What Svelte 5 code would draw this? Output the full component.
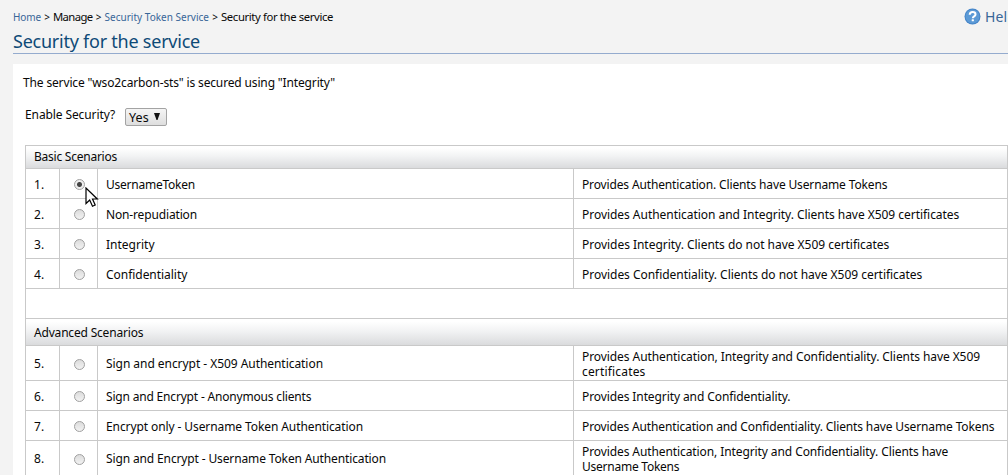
<script>
  const basic = [
    { n: '1.', name: 'UsernameToken', w: 89, lines: [['Provides Authentication. Clients have Username Tokens', 305.3]], checked: true },
    { n: '2.', name: 'Non-repudiation', w: 91, lines: [['Provides Authentication and Integrity. Clients have X509 certificates', 377.3]] },
    { n: '3.', name: 'Integrity', w: 48.5, lines: [['Provides Integrity. Clients do not have X509 certificates', 307.3]] },
    { n: '4.', name: 'Confidentiality', w: 81.3, lines: [['Provides Confidentiality. Clients do not have X509 certificates', 340.3]] }
  ];
  const advanced = [
    { n: '5.', name: 'Sign and encrypt - X509 Authentication', w: 217, h: 35, lines: [['Provides Authentication, Integrity and Confidentiality. Clients have X509', 398], ['certificates', 63.5]] },
    { n: '6.', name: 'Sign and Encrypt - Anonymous clients', w: 205.3, lines: [['Provides Integrity and Confidentiality.', 208.3]] },
    { n: '7.', name: 'Encrypt only - Username Token Authentication', w: 257, lines: [['Provides Authentication and Confidentiality. Clients have Username Tokens', 412.3]] },
    { n: '8.', name: 'Sign and Encrypt - Username Token Authentication', w: 280, h: 35, lines: [['Provides Authentication, Integrity and Confidentiality. Clients have', 366.3], ['Username Tokens', 97.3]] }
  ];

  // Tracks a single line of text so that it spans the given width.
  function track(node, width) {
    const natural = node.getBoundingClientRect().width;
    node.style.letterSpacing = (width - natural) / node.textContent.length + 'px';
  }
</script>

{#snippet row(r)}
  <div class="row" style:height="{r.h ?? 30}px">
    <div class="cell"><span use:track={10.5}>{r.n}</span></div>
    <div class="cell pick"><i class="radio" class:on={r.checked}></i></div>
    <div class="cell"><span use:track={r.w}>{r.name}</span></div>
    <div class="cell desc">
      {#each r.lines as [text, w]}<div><span use:track={w}>{text}</span></div>{/each}
    </div>
  </div>
{/snippet}

<div class="page">
  <header>
    <nav>
      <a href="#home"><span use:track={28}>Home</span></a><b>&gt;</b><em><span use:track={39.5}>Manage</span></em><b>&gt;</b><a href="#sts"><span use:track={104.5}>Security Token Service</span></a><b>&gt;</b><em><span use:track={112}>Security for the service</span></em>
    </nav>
    <a class="help" href="#help">
      <svg width="17" height="17" viewBox="0 0 17 17">
        <circle cx="8.5" cy="8.5" r="8" fill="#4484c8" />
        <circle cx="8.5" cy="8.5" r="7" fill="#5c9ad6" />
        <path d="M5.7 6.7C5.8 4.9 7 4.1 8.6 4.1c1.8 0 2.9 1 2.9 2.3 0 2-2.7 2-2.7 3.8" fill="none" stroke="#fff" stroke-width="2" />
        <rect x="7.7" y="11.2" width="2.2" height="2.1" rx=".5" fill="#fff" />
      </svg>
      <span use:track={31}>Help</span>
    </a>
  </header>
  <h1><span use:track={187}>Security for the service</span></h1>
  <main>
    <p><span use:track={312}>The service "wso2carbon-sts" is secured using "Integrity"</span></p>
    <div class="enable">
      <label for="enable"><span use:track={90}>Enable Security?</span></label>
      <button id="enable"><span use:track={20}>Yes</span><svg width="6" height="8" viewBox="0 0 6 8"><path d="M0 0H6L3.5 7H2.5Z" fill="#111" /></svg></button>
    </div>
    <section>
      <div class="head"><span use:track={83}>Basic Scenarios</span></div>
      {#each basic as r}{@render row(r)}{/each}
      <div class="gap"></div>
      <div class="head tall"><span use:track={109.3}>Advanced Scenarios</span></div>
      {#each advanced as r}{@render row(r)}{/each}
    </section>
  </main>
  <svg class="cursor" width="14" height="21" viewBox="0 0 14 21">
    <path d="M1 1V16.5L4.7 13 7.5 19.2 10.2 18 7.5 12H12.3Z" fill="#fff" stroke="#000" stroke-width="1.2" />
  </svg>
</div>

<style>
  :global(body) { margin: 0; }
  .page {
    position: relative; width: 1008px; height: 475px; overflow: hidden;
    box-sizing: border-box; padding-left: 13px; background: #f3f3f3; color: #080808;
    font: 12px/15px "Noto Sans", "Open Sans", sans-serif; white-space: nowrap;
  }
  span { display: inline-block; }
  a { text-decoration: none; color: #386698; }
  header { display: flex; justify-content: space-between; height: 31px; }
  nav { display: flex; padding-top: 9px; }
  nav a { font-size: 10px; line-height: 16px; }
  nav b { width: 12px; text-align: center; font-weight: 400; font-size: 10px; line-height: 16px; }
  nav em { font-style: normal; font-size: 11.3px; }
  .help { display: flex; gap: 4px; width: 44px; padding-top: 8px; font-size: 14px; line-height: 18px; flex: none; }
  .help svg { flex: none; }
  h1 {
    height: 22px; margin: 0; border-bottom: 1px solid #94abce;
    font-size: 18px; line-height: 21px; font-weight: 400; color: #0e4a77;
  }
  main { height: 411px; margin-top: 10px; background: #fff; }
  p { margin: 0; padding: 11px 0 0 10px; }
  .enable { display: flex; height: 55px; padding: 17px 0 0 12px; box-sizing: border-box; }
  label { width: 100px; }
  button {
    display: flex; align-items: center; gap: 5px; width: 42px; height: 18px; margin-top: 1px;
    padding: 0 0 0 3px; border: 1px solid #a3a3a3; border-radius: 2px;
    background: linear-gradient(#f5f5f5, #dedede); color: #080808;
    font: 12.5px/16px "Noto Sans", sans-serif;
  }
  button span { padding-top: 1px; }
  section {
    width: 983px; margin-left: 12px; box-sizing: border-box;
    border: 1px solid #c9c9c9; border-bottom: 0;
  }
  .head, .row, .gap { box-sizing: border-box; border-bottom: 1px solid #c9c9c9; }
  .head {
    height: 23px; padding-left: 8px; line-height: 22px;
    background: linear-gradient(#fff 10%, #f1f2f3 48%, #dadbdd);
  }
  .tall { height: 27px; line-height: 27px; }
  .gap { height: 30px; }
  .row { display: grid; grid-template-columns: 34px 38px 476px 1fr; }
  .cell {
    display: flex; align-items: center; box-sizing: border-box;
    padding: 1px 0 0 8px; border-right: 1px solid #c9c9c9;
  }
  .desc { flex-direction: column; align-items: flex-start; justify-content: center; border: 0; }
  .desc div { height: 15px; }
  .pick { padding: 2px 0 0 14px; }
  .radio {
    width: 11px; height: 11px; box-sizing: border-box; border: 1px solid #a0a0a0;
    border-radius: 50%; background: linear-gradient(#dcdcdc, #f2f2f2);
  }
  .on { background: radial-gradient(circle, #444 0 2px, #eee 3px); }
  .cursor { position: absolute; left: 85px; top: 187px; }
</style>
